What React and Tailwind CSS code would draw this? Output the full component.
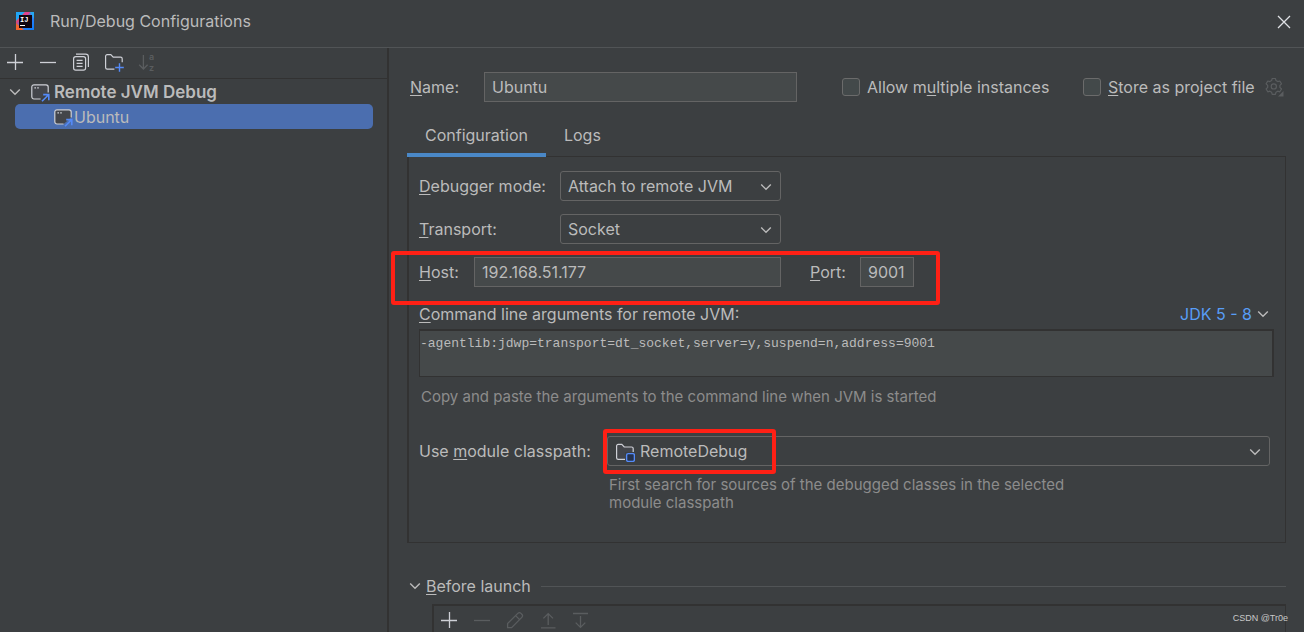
import React, { useState } from 'react';

const ChevronDown = ({ className = '' }) => (
  <svg className={`h-4 w-4 shrink-0 ${className}`} viewBox="0 0 16 16" fill="none" stroke="currentColor" strokeWidth="1.4" aria-hidden="true">
    <path d="M3.2 5.6 8 10.2l4.8-4.6" />
  </svg>
);

const Plus = () => (
  <svg className="h-5 w-5" viewBox="0 0 20 20" fill="none" stroke="currentColor" strokeWidth="1.3" aria-hidden="true">
    <path d="M2 10.5h16M10.5 2v16" />
  </svg>
);

const Minus = () => (
  <svg className="h-5 w-5" viewBox="0 0 20 20" fill="none" stroke="currentColor" strokeWidth="1.3" aria-hidden="true">
    <path d="M2 10.5h16" />
  </svg>
);

const Copy = () => (
  <svg className="h-5 w-5" viewBox="0 0 20 20" fill="none" stroke="currentColor" strokeWidth="1.2" aria-hidden="true">
    <rect x="2.6" y="4.6" width="12" height="13.6" rx="2.2" />
    <path d="M5 2.2h9.6a2.8 2.8 0 0 1 2.8 2.8v10M5.6 8.4h6M5.6 11.4h6M5.6 14.4h6" />
  </svg>
);

const FolderAdd = () => (
  <svg className="h-5 w-5" viewBox="0 0 20 20" fill="none" strokeWidth="1.2" aria-hidden="true">
    <path stroke="currentColor" d="M10.4 17.2H3.2a1.6 1.6 0 0 1-1.6-1.6V4.2a1.6 1.6 0 0 1 1.6-1.6h3.6l2.4 2.6h7.4a1.6 1.6 0 0 1 1.6 1.6v3.4" />
    <path stroke="#548af7" strokeWidth="1.4" d="M15.5 11.2v8.6M11.2 15.5h8.6" />
  </svg>
);

const SortAZ = () => (
  <svg className="h-5 w-5" viewBox="0 0 20 20" fill="none" stroke="currentColor" strokeWidth="1.3" aria-hidden="true">
    <path d="M6.4 3v14M2.2 12.8l4.2 4.2 4.2-4.2" />
    <text x="12" y="8" fontSize="9" fontWeight="600" fontFamily="Inter, sans-serif" fill="currentColor" stroke="none">a</text>
    <text x="12" y="19" fontSize="9" fontWeight="600" fontFamily="Inter, sans-serif" fill="currentColor" stroke="none">z</text>
  </svg>
);

const RemoteIcon = () => (
  <svg className="h-5 w-5 shrink-0" viewBox="0 0 20 20" fill="none" strokeWidth="1.2" aria-hidden="true">
    <path fill="#43454a" d="M10.6 17H4a2.2 2.2 0 0 1-2.2-2.2V5A2.2 2.2 0 0 1 4 2.8h12A2.2 2.2 0 0 1 18.2 5v5.6L10.6 17Z" />
    <path stroke="#ced0d6" d="M10.6 17H4a2.2 2.2 0 0 1-2.2-2.2V5A2.2 2.2 0 0 1 4 2.8h12A2.2 2.2 0 0 1 18.2 5v5.6" />
    <path stroke="#ced0d6" strokeWidth="1.4" d="M4.4 5.9h1.6M7.2 5.9h1.6" />
    <path stroke="#548af7" strokeWidth="1.6" d="m12 19.300 6.600-6.600M13.200 12.600h5.600v5.600" />
  </svg>
);

const ModuleIcon = () => (
  <svg className="h-5 w-5" viewBox="0 0 20 20" fill="none" strokeWidth="1.2" aria-hidden="true">
    <path stroke="#ced0d6" fill="#43454a" d="M10 17.4H3.2a1.6 1.6 0 0 1-1.6-1.6V4a1.6 1.6 0 0 1 1.6-1.6h3.6l2.4 2.6h7.4a1.6 1.6 0 0 1 1.6 1.6V10" />
    <path fill="#3c3f41" d="M10 10h10v10H10z" />
    <rect x="11.6" y="11.6" width="7.8" height="7.8" rx="1.6" stroke="#548af7" strokeWidth="1.4" fill="#25324d" />
  </svg>
);

const Pencil = () => (
  <svg className="h-5 w-5" viewBox="0 0 20 20" fill="none" stroke="currentColor" strokeWidth="1.3" aria-hidden="true">
    <path d="M2.6 17.6v-4L12.8 3.4a2.3 2.3 0 0 1 3.2 0l.8.8a2.3 2.3 0 0 1 0 3.2L6.6 17.6h-4ZM10.6 5.600l4 4" />
  </svg>
);

const MoveUp = () => (
  <svg className="h-5 w-5" viewBox="0 0 20 20" fill="none" stroke="currentColor" strokeWidth="1.3" aria-hidden="true">
    <path d="M3 17.8h14.5M10.2 15V3.6M5.4 8.4l4.8-4.8L15 8.4" />
  </svg>
);

const MoveDown = () => (
  <svg className="h-5 w-5" viewBox="0 0 20 20" fill="none" stroke="currentColor" strokeWidth="1.3" aria-hidden="true">
    <path d="M2 3.5h15M9.500 6v11.400M4.700 12.600l4.800 4.800 4.800-4.800" />
  </svg>
);

const Gear = () => (
  <svg className="h-5 w-5" viewBox="0 0 20 20" fill="none" stroke="currentColor" strokeWidth="1.2" aria-hidden="true">
    <path strokeLinejoin="round" d="M7.6 3.6 8.2 1.5h3.2l.6 2.1 1.7 1 2.1-.6 1.7 2.8-1.6 1.6v2l1.600 1.600-1.700 2.800-2.100-.6-1.700 1-.6 2.100H8.200l-.6-2.100-1.700-1-2.100.6L2.100 12l1.600-1.600v-2L2.100 6.800 3.800 4l2.100.6Z" />
    <circle cx="9.800" cy="9.400" r="2.600" />
    <path d="M19.500 14v5.500H14Z" fill="currentColor" stroke="none" />
  </svg>
);

const Logo = () => (
  <svg className="h-[18px] w-[18px]" viewBox="0 0 18 18" aria-hidden="true">
    <defs>
      <linearGradient id="ij" x1="0" y1="0" x2="1" y2="1">
        <stop offset="0" stopColor="#fc801d" />
        <stop offset="0.3" stopColor="#e0457b" />
        <stop offset="0.5" stopColor="#3a7ff5" />
        <stop offset="1" stopColor="#087cfa" />
      </linearGradient>
    </defs>
    <rect width="18" height="18" fill="url(#ij)" />
    <path d="M0 0h9L0 9Z" fill="#1fa5f5" />
    <path d="M9 0h5L12 3H8Z" fill="#e0408f" />
    <path d="M14 0h4v7Z" fill="#25a8f0" />
    <path d="M0 11v7h8Z" fill="#f5652b" />
    <rect x="3" y="3" width="13" height="13" fill="#100510" />
    <text x="4" y="9.500" fontSize="7" fontWeight="700" fontFamily="Liberation Mono, monospace" fill="#fff">IJ</text>
    <path d="M4 13h5v1H4z" fill="#fff" />
  </svg>
);

// Underlined mnemonic letter inside a label
const Key = ({ children }) => (
  <span className="underline decoration-1 underline-offset-2">{children}</span>
);

const ToolButton = ({ label, disabled, children }) => (
  <button
    type="button"
    aria-label={label}
    disabled={disabled}
    className="flex h-5 w-5 items-center justify-center text-[#ced0d6] disabled:text-[#5a5d5f]"
  >
    {children}
  </button>
);

const Select = ({ id, options }) => (
  <div className="relative w-[221px]">
    <select
      id={id}
      className="h-[30px] w-full appearance-none rounded-[3px] border border-[#646464] bg-[#3c3f41] px-[7px] text-base leading-5 outline-none"
    >
      {options.map((option) => (
        <option key={option}>{option}</option>
      ))}
    </select>
    <ChevronDown className="pointer-events-none absolute top-2 right-[7px]" />
  </div>
);

const inputClass = 'h-[30px] border border-[#646464] bg-[#45494a] px-[7px] text-base leading-5 outline-none';
const checkClass = 'h-[18px] w-[18px] appearance-none rounded-[3px] border border-[#6b6b6b] bg-[#43494a] checked:bg-[#4b6eaf]';

const Sidebar = () => (
  <aside className="w-[389px] shrink-0 border-r-2 border-[#323232]">
    <div className="flex h-[31px] items-center gap-[13px] border-b border-[#323232] px-[5px] pb-[2px]">
      <ToolButton label="Add"><Plus /></ToolButton>
      <ToolButton label="Remove"><Minus /></ToolButton>
      <ToolButton label="Copy"><Copy /></ToolButton>
      <ToolButton label="New folder"><FolderAdd /></ToolButton>
      <ToolButton label="Sort" disabled><SortAZ /></ToolButton>
    </div>
    <ul className="pr-[14px] pl-[7px]">
      <li>
        <div className="flex h-[25px] items-center">
          <ChevronDown />
          <span className="ml-[7px]"><RemoteIcon /></span>
          <span className="ml-1 text-[17px] font-semibold">Remote JVM Debug</span>
        </div>
        <ul className="pl-2">
          <li className="flex h-[25px] items-center rounded-[5px] bg-[#4b6eaf] pl-[38px]">
            <RemoteIcon />
            <span className="ml-px">Ubuntu</span>
          </li>
        </ul>
      </li>
    </ul>
  </aside>
);

const Tabs = ({ active, onChange }) => (
  <div role="tablist" className="relative z-10 flex">
    {['Configuration', 'Logs'].map((tab) => (
      <button
        key={tab}
        type="button"
        role="tab"
        aria-selected={active === tab}
        onClick={() => onChange(tab)}
        className={`h-[41px] border-b-4 px-[18px] ${active === tab ? 'border-[#4a88c7]' : 'border-transparent'}`}
      >
        {tab}
      </button>
    ))}
  </div>
);

const ConfigurationPanel = () => (
  <section className="-mt-px flex h-[387px] flex-col border border-l-2 border-[#323232] pt-[14px] pr-[11px] pl-[10px]">
    <div className="flex flex-col gap-[13px]">
      <div className="flex items-center">
        <label htmlFor="mode" className="w-[141px]"><Key>D</Key>ebugger mode:</label>
        <Select id="mode" options={['Attach to remote JVM', 'Listen to remote JVM']} />
      </div>
      <div className="flex items-center">
        <label htmlFor="transport" className="w-[141px]"><Key>T</Key>ransport:</label>
        <Select id="transport" options={['Socket', 'Shared memory']} />
      </div>
      <div className="relative flex w-[495px] items-center">
        <label htmlFor="host" className="w-[55px]"><Key>H</Key>ost:</label>
        <input id="host" defaultValue="192.168.51.177" className={`w-[307px] ${inputClass}`} />
        <label htmlFor="port" className="ml-[29px] w-[50px]"><Key>P</Key>ort:</label>
        <input id="port" defaultValue="9001" className={`w-[54px] ${inputClass}`} />
        <div className="pointer-events-none absolute -top-[6px] -right-[26px] -bottom-[18px] -left-7 rounded-[3px] border-4 border-[#ff2015]" />
      </div>
    </div>

    <div className="mt-[17px] flex items-center justify-between">
      <label htmlFor="args"><Key>C</Key>ommand line arguments for remote JVM:</label>
      <button type="button" className="flex items-center gap-[3px] pr-[3px] text-[#589df6]">
        JDK 5 - 8
        <ChevronDown className="text-[#bbbbbb]" />
      </button>
    </div>
    <textarea
      id="args"
      readOnly
      defaultValue="-agentlib:jdwp=transport=dt_socket,server=y,suspend=n,address=9001"
      className="mt-[5px] block h-12 w-full shrink-0 resize-none border border-t-2 border-r-2 border-[#323232] bg-[#45494a] pt-1 font-['Liberation_Mono',monospace] text-[13px] leading-[18px] outline-none"
    />
    <p className="mt-[11px] pl-[2px] text-[15px] leading-[18px] text-[#8c8c8c]">
      Copy and paste the arguments to the command line when JVM is started
    </p>

    <div className="mt-[30px] flex items-start pr-1">
      <label htmlFor="module" className="w-[188px] shrink-0 leading-[30px]">Use <Key>m</Key>odule classpath:</label>
      <div className="min-w-0 grow">
        <div className="relative">
          <select
            id="module"
            className="h-[30px] w-full appearance-none rounded-[3px] border border-[#646464] bg-[#3c3f41] pr-8 pl-8 text-base leading-5 outline-none"
          >
            <option>RemoteDebug</option>
          </select>
          <span className="pointer-events-none absolute top-[6px] left-2"><ModuleIcon /></span>
          <ChevronDown className="pointer-events-none absolute top-2 right-[7px]" />
          <div className="pointer-events-none absolute -top-[7px] -bottom-2 -left-1 w-[173px] rounded-[3px] border-4 border-[#ff2015]" />
        </div>
        <p className="mt-[10px] w-[480px] pl-[2px] text-[15px] leading-[18px] text-[#8c8c8c]">
          First search for sources of the debugged classes in the selected module classpath
        </p>
      </div>
    </div>
  </section>
);

const BeforeLaunch = () => (
  <section className="mt-[31px] flex grow flex-col">
    <button type="button" className="flex w-full items-center leading-6">
      <ChevronDown />
      <span className="ml-[3px]"><Key>B</Key>efore launch</span>
      <span className="ml-[10px] h-px grow bg-[#515456]" />
    </button>
    <div className="mt-[6px] ml-[25px] flex grow items-start gap-[13px] border border-t-2 border-l-2 border-b-0 border-[#323232] px-[5px] pt-1">
      <ToolButton label="Add task"><Plus /></ToolButton>
      <ToolButton label="Remove task" disabled><Minus /></ToolButton>
      <ToolButton label="Edit task" disabled><Pencil /></ToolButton>
      <ToolButton label="Move up" disabled><MoveUp /></ToolButton>
      <ToolButton label="Move down" disabled><MoveDown /></ToolButton>
    </div>
  </section>
);

const App = () => {
  const [tab, setTab] = useState('Configuration');

  return (
    <div className="relative flex h-screen flex-col overflow-hidden bg-[#3c3f41] font-['Inter',sans-serif] text-base leading-5 text-[#bbbbbb]">
      <header className="flex h-12 shrink-0 items-center border-b border-[#515456] pr-3 pb-[6px] pl-4">
        <Logo />
        <h1 className="ml-4">Run/Debug Configurations</h1>
        <button type="button" aria-label="Close" className="ml-auto text-[#dfe1e5]">
          <svg className="h-4 w-4" viewBox="0 0 16 16" fill="none" stroke="currentColor" strokeWidth="1.3" aria-hidden="true">
            <path d="m2 3 12 12M14 3 2 15" />
          </svg>
        </button>
      </header>

      <div className="flex min-h-0 grow">
        <Sidebar />
        <main className="flex min-w-0 grow flex-col px-[18px] pt-6">
          <div className="flex items-center pl-[3px]">
            <label htmlFor="name" className="w-[74px]"><Key>N</Key>ame:</label>
            <input id="name" defaultValue="Ubuntu" className={`w-[313px] ${inputClass}`} />
            <div className="ml-auto flex items-center">
              <label className="flex w-[241px] items-center gap-[7px]">
                <input type="checkbox" className={checkClass} />
                <span>Allow m<Key>u</Key>ltiple instances</span>
              </label>
              <label className="flex w-[181px] items-center gap-[7px]">
                <input type="checkbox" className={checkClass} />
                <span><Key>S</Key>tore as project file</span>
              </label>
              <span className="pr-[2px]"><ToolButton label="Storage settings" disabled><Gear /></ToolButton></span>
            </div>
          </div>
          <div className="mt-[14px]">
            <Tabs active={tab} onChange={setTab} />
          </div>
          <ConfigurationPanel />
          <BeforeLaunch />
        </main>
      </div>

      <span className="pointer-events-none absolute right-4 bottom-2 font-['Liberation_Sans',sans-serif] text-[9px] leading-3 text-[#c8c8c8]">
        CSDN @Tr0e
      </span>
    </div>
  );
};

export default App;
